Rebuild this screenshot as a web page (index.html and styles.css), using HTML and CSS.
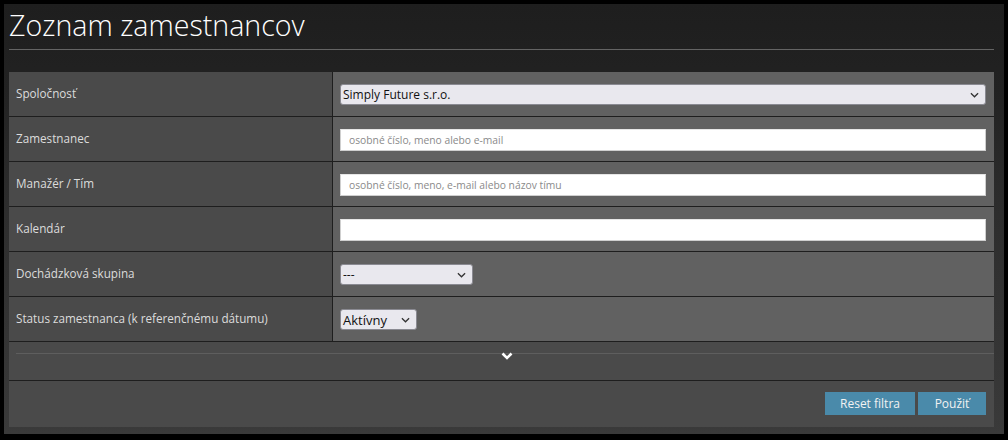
FILE: index.html
```html
<!DOCTYPE html>
<html lang="sk">
<head>
<meta charset="utf-8">
<title>Zoznam zamestnancov</title>
<link rel="stylesheet" href="styles.css">
</head>
<body>
<div class="page">
  <h1 class="title">Zoznam zamestnancov</h1>
  <hr class="rule">
  <div class="panel">
    <div class="rows">
      <div class="label">Spoločnosť</div>
      <div class="value"><div class="select wide"><span>Simply Future s.r.o.</span><svg class="caret" viewBox="0 0 10 6"><polyline points="1,1 5,5 9,1"/></svg></div></div>
      <div class="label">Zamestnanec</div>
      <div class="value"><input class="text" type="text" placeholder="osobné číslo, meno alebo e-mail"></div>
      <div class="label">Manažér / Tím</div>
      <div class="value"><input class="text" type="text" placeholder="osobné číslo, meno, e-mail alebo názov tímu"></div>
      <div class="label">Kalendár</div>
      <div class="value"><input class="text" type="text"></div>
      <div class="label">Dochádzková skupina</div>
      <div class="value"><div class="select group"><span>---</span><svg class="caret" viewBox="0 0 10 6"><polyline points="1,1 5,5 9,1"/></svg></div></div>
      <div class="label">Status zamestnanca (k referenčnému dátumu)</div>
      <div class="value"><div class="select status"><span>Aktívny</span><svg class="caret" viewBox="0 0 10 6"><polyline points="1,1 5,5 9,1"/></svg></div></div>
    </div>
    <div class="more">
      <div class="more-line"></div>
      <svg class="chevron" viewBox="0 0 12 8"><polyline points="1.5,1.5 6,6 10.5,1.5"/></svg>
    </div>
    <div class="actions">
      <button class="btn">Reset filtra</button>
      <button class="btn">Použiť</button>
    </div>
  </div>
</div>
</body>
</html>
```
FILE: styles.css
```css
html, body {
  margin: 0;
  padding: 0;
  background: #000;
}
body {
  width: 1008px;
  height: 440px;
  overflow: hidden;
  font-family: "Open Sans", "Noto Sans", sans-serif;
}
.page {
  margin: 4px 4px 0 4px;
  height: 430px;
  box-sizing: border-box;
  padding: 0 10px 0 5px;
  background: linear-gradient(180deg, #1e1e1e 0%, #222 20%, #2c2c2c 45%, #3a3a3a 100%);
  overflow: hidden;
}
.title {
  margin: 0;
  padding-top: 2px;
  font-weight: 300;
  font-size: 28.6px;
  line-height: 38px;
  color: #fff;
  letter-spacing: 0;
}
.rule {
  margin: 5px 0 0 0;
  border: 0;
  height: 1px;
  background: #646464;
}
.panel {
  margin-top: 22px;
  background: #4a4a4a;
}
.rows {
  display: grid;
  grid-template-columns: 324px 1fr;
}
.label, .value {
  border-bottom: 1px solid #1e1e1e;
  box-sizing: content-box;
}
.label {
  background: #4a4a4a;
  border-right: 1px solid #1e1e1e;
  color: #dcdcdc;
  font-size: 11.7px;
  padding: 13px 0 0 7px;
  height: 31px;
  line-height: 16px;
}
.value {
  background: #616161;
  padding: 12px 8px 0 7px;
  height: 32px;
}
.select {
  height: 21px;
  box-sizing: border-box;
  background: #e9e8ee;
  border: 1px solid #8a8a92;
  border-radius: 3px;
  display: flex;
  align-items: center;
  justify-content: space-between;
  padding: 0 6px 0 2px;
  font-size: 12px;
  color: #111;
}
.select.wide { width: 100%; }
.select.group { width: 133px; }
.select.status { width: 77px; font-size: 13px; }
.caret {
  width: 9px;
  height: 6px;
  fill: none;
  stroke: #333;
  stroke-width: 1.4;
}
.text {
  display: block;
  width: 100%;
  height: 22px;
  box-sizing: border-box;
  margin: 0;
  border: 1px solid #cfcfcf;
  border-top-color: #e6e6e6;
  background: #fff;
  padding: 0 8px;
  font-family: "Open Sans", "Noto Sans", sans-serif;
  font-size: 10.3px;
  color: #333;
  outline: none;
}
.text::placeholder { color: #8a8a8a; }
.more {
  height: 39px;
  border-bottom: 1px solid #1e1e1e;
  display: flex;
  flex-direction: column;
  align-items: center;
  padding: 11px 0 0 7px;
  box-sizing: border-box;
  position: relative;
}
.more-line {
  align-self: stretch;
  height: 1px;
  background: #5e5e5e;
}
.chevron {
  width: 12px;
  height: 8px;
  fill: none;
  stroke: #fff;
  stroke-width: 2.6;
  position: absolute;
  top: 10px;
  left: 492px;
}
.actions {
  height: 46px;
  display: flex;
  justify-content: flex-end;
  align-items: flex-start;
  gap: 3px;
  padding: 11px 8px 0 0;
  box-sizing: border-box;
}
.btn {
  height: 23px;
  border: 0;
  background: #4a8aaa;
  color: #f2f2f2;
  font-family: "Open Sans", "Noto Sans", sans-serif;
  font-size: 12px;
  padding: 0;
  margin: 0;
}
.btn:first-child { width: 90px; }
.btn:last-child { width: 68px; }
```
